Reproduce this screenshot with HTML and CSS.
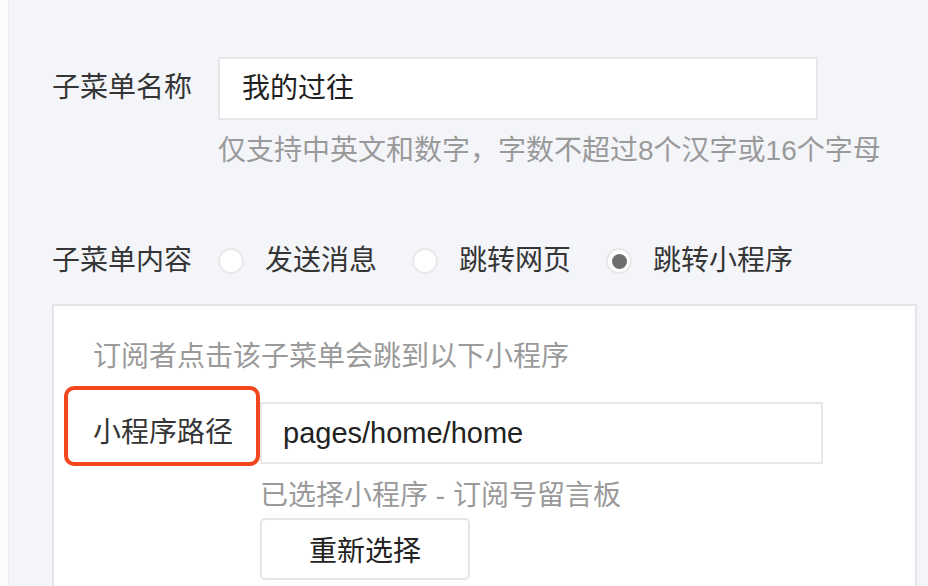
FILE: index.html
```html
<!DOCTYPE html>
<html lang="zh-CN">
<head>
    <meta charset="UTF-8">
    <meta name="viewport" content="width=device-width, initial-scale=1.0">
    <title>子菜单设置</title>
    <link rel="stylesheet" href="styles.css">
</head>
<body>
    <div class="page">
        <div class="field">
            <div class="field-label">子菜单名称</div>
            <div class="field-body">
                <div class="input">我的过往</div>
                <div class="hint hint-name">仅支持中英文和数字，字数不超过8个汉字或16个字母</div>
            </div>
        </div>

        <div class="field field-content">
            <div class="field-label">子菜单内容</div>
            <div class="radios">
                <span class="radio"><i class="radio-dot"></i>发送消息</span>
                <span class="radio"><i class="radio-dot"></i>跳转网页</span>
                <span class="radio checked"><i class="radio-dot"></i>跳转小程序</span>
            </div>
        </div>

        <div class="panel">
            <div class="hint">订阅者点击该子菜单会跳到以下小程序</div>
            <div class="mp-row">
                <div class="mp-label">小程序路径</div>
                <div class="mp-body">
                    <div class="input input-path">pages/home/home</div>
                    <div class="hint hint-selected">已选择小程序 - 订阅号留言板</div>
                    <button class="btn">重新选择</button>
                </div>
            </div>
        </div>
    </div>
</body>
</html>
```

FILE: styles.css
```css
*, *::before, *::after {
    box-sizing: border-box;
}
body {
    margin: 0;
    background: #fbfbfc;
    font-family: "Liberation Sans", "Noto Sans CJK SC", sans-serif;
    font-size: 28px;
    color: #333;
}
.page {
    margin-left: 8px;
    height: 586px;
    overflow: hidden;
    background: #f4f5f9;
    border-left: 1px solid #e9eaee;
    padding: 57px 11px 0 43px;
}
.field {
    display: flex;
}
.field-label {
    width: 166px;
    line-height: 62px;
    color: #353535;
}
.field-body {
    width: 600px;
}
.input {
    height: 63px;
    line-height: 59px;
    padding: 0 22px;
    background: #fff;
    border: 2px solid #e6e7ea;
    color: #222;
}
.hint {
    line-height: 40px;
    color: #9a9a9a;
}
.hint-name {
    margin-top: 11px;
    white-space: nowrap;
}
.field-content {
    margin-top: 70px;
    align-items: center;
}
.field-content .field-label {
    line-height: 40px;
}
.radios {
    display: flex;
    align-items: center;
}
.radio {
    display: flex;
    align-items: center;
    line-height: 40px;
    color: #353535;
    margin-right: 35px;
}
.radio-dot {
    width: 26px;
    height: 26px;
    border-radius: 50%;
    background: #fff;
    border: 2px solid #e8e8ea;
    margin-right: 21px;
    display: flex;
    align-items: center;
    justify-content: center;
}
.radio.checked .radio-dot::after {
    content: "";
    width: 15px;
    height: 15px;
    border-radius: 50%;
    background: #6e6e70;
}
.panel {
    margin-top: 23px;
    background: #fff;
    border: 2px solid #e4e5e8;
    height: 400px;
    padding: 31px 0 0 39px;
}
.mp-row {
    display: flex;
    margin-top: 25px;
}
.mp-label {
    position: relative;
    width: 167px;
    height: 62px;
    line-height: 62px;
    color: #353535;
}
.mp-label::after {
    content: "";
    position: absolute;
    left: -29px;
    top: -16px;
    width: 196px;
    height: 80px;
    border: 4px solid #f2461e;
    border-radius: 10px;
}
.mp-body {
    width: 563px;
}
.input-path {
    height: 62px;
    line-height: 58px;
    padding: 0 21px;
    border-color: #e7e7e9;
    font-size: 29px;
}
.hint-selected {
    margin-top: 12px;
}
.btn {
    display: block;
    margin-top: 2px;
    width: 210px;
    height: 62px;
    background: #fff;
    border: 2px solid #e6e6e8;
    border-radius: 5px;
    font-family: inherit;
    font-size: 28px;
    color: #222;
}
```
